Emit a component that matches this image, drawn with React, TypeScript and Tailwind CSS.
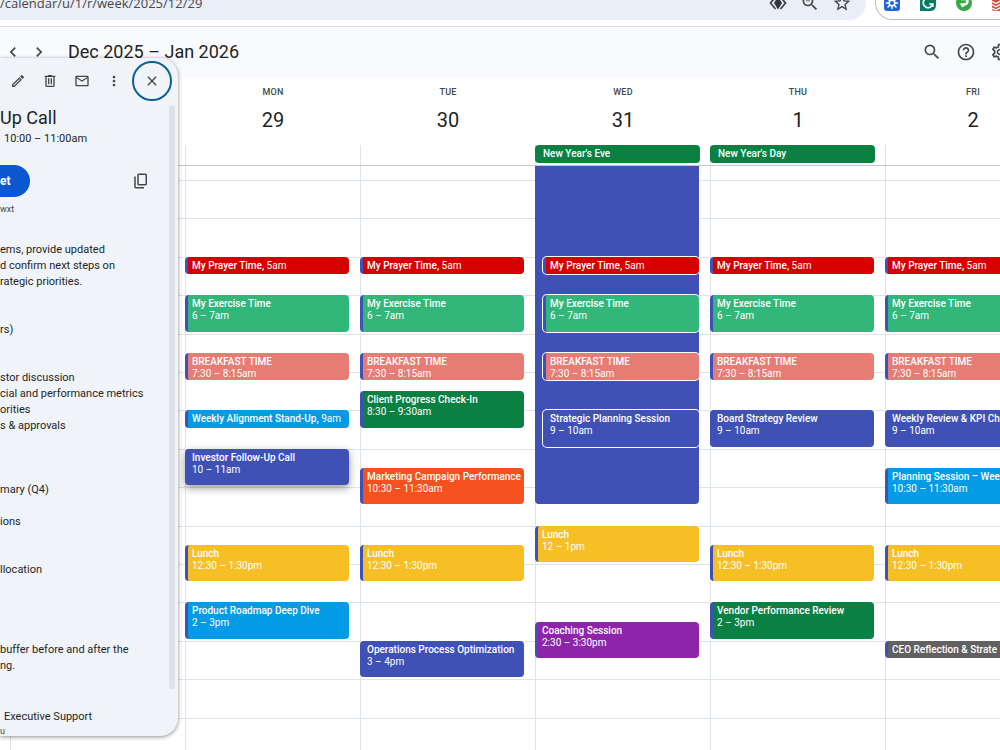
import type { ReactNode } from "react";
import clsx from "clsx";
import {
  MdChevronLeft,
  MdChevronRight,
  MdClose,
  MdHelpOutline,
  MdMoreVert,
  MdOutlineEdit,
  MdOutlineMail,
  MdOutlineSettings,
  MdSearch,
  MdStarBorder,
  MdZoomOut,
} from "react-icons/md";

interface CalendarEvent {
  title: string;
  time?: string;
  start: number;
  end: number;
  color: string;
  inline?: boolean;
  nested?: boolean;
  selected?: boolean;
}

interface Day {
  name: string;
  date: string;
  holiday?: string;
  events: CalendarEvent[];
}

const FIRST_HOUR = 3;
const HOURS = Array.from({ length: 15 }, (_, i) => FIRST_HOUR + i);

const prayer: CalendarEvent = {
  title: "My Prayer Time",
  time: "5am",
  start: 5,
  end: 5.5,
  color: "bg-[#d50000]",
  inline: true,
};
const exercise: CalendarEvent = {
  title: "My Exercise Time",
  time: "6 – 7am",
  start: 6,
  end: 7,
  color: "bg-[#33b679]",
};
const breakfast: CalendarEvent = {
  title: "BREAKFAST TIME",
  time: "7:30 – 8:15am",
  start: 7.5,
  end: 8.25,
  color: "bg-[#e67c73]",
};
const lunch: CalendarEvent = {
  title: "Lunch",
  time: "12:30 – 1:30pm",
  start: 12.5,
  end: 13.5,
  color: "bg-[#f6bf26]",
};
const routine = [prayer, exercise, breakfast];

const DAYS: Day[] = [
  { name: "", date: "", events: [] },
  {
    name: "MON",
    date: "29",
    events: [
      ...routine,
      { title: "Weekly Alignment Stand-Up", time: "9am", start: 9, end: 9.5, color: "bg-[#039be5]", inline: true },
      { title: "Investor Follow-Up Call", time: "10 – 11am", start: 10, end: 11, color: "bg-[#3f51b5]", selected: true },
      lunch,
      { title: "Product Roadmap Deep Dive", time: "2 – 3pm", start: 14, end: 15, color: "bg-[#039be5]" },
    ],
  },
  {
    name: "TUE",
    date: "30",
    events: [
      ...routine,
      { title: "Client Progress Check-In", time: "8:30 – 9:30am", start: 8.5, end: 9.5, color: "bg-[#0b8043]" },
      { title: "Marketing Campaign Performance", time: "10:30 – 11:30am", start: 10.5, end: 11.5, color: "bg-[#f4511e]" },
      lunch,
      { title: "Operations Process Optimization", time: "3 – 4pm", start: 15, end: 16, color: "bg-[#3f51b5]" },
    ],
  },
  {
    name: "WED",
    date: "31",
    holiday: "New Year's Eve",
    events: [
      { title: "", start: 2, end: 11.5, color: "bg-[#3f51b5]" },
      ...routine.map((event) => ({ ...event, nested: true })),
      { title: "Strategic Planning Session", time: "9 – 10am", start: 9, end: 10, color: "bg-[#3f51b5]", nested: true },
      { ...lunch, time: "12 – 1pm", start: 12, end: 13 },
      { title: "Coaching Session", time: "2:30 – 3:30pm", start: 14.5, end: 15.5, color: "bg-[#8e24aa]" },
    ],
  },
  {
    name: "THU",
    date: "1",
    holiday: "New Year's Day",
    events: [
      ...routine,
      { title: "Board Strategy Review", time: "9 – 10am", start: 9, end: 10, color: "bg-[#3f51b5]" },
      lunch,
      { title: "Vendor Performance Review", time: "2 – 3pm", start: 14, end: 15, color: "bg-[#0b8043]" },
    ],
  },
  {
    name: "FRI",
    date: "2",
    events: [
      ...routine,
      { title: "Weekly Review & KPI Ch", time: "9 – 10am", start: 9, end: 10, color: "bg-[#3f51b5]" },
      { title: "Planning Session – Wee", time: "10:30 – 11:30am", start: 10.5, end: 11.5, color: "bg-[#039be5]" },
      lunch,
      { title: "CEO Reflection & Strate", start: 15, end: 15.5, color: "bg-[#616161]", inline: true },
    ],
  },
];

// One blank entry is one empty 16px line
const DESCRIPTION = [
  "ems, provide updated",
  "d confirm next steps on",
  "rategic priorities.",
  "",
  "",
  "rs)",
  "",
  "",
  "stor discussion",
  "cial and performance metrics",
  "orities",
  "s & approvals",
  "",
  "",
  "",
  "mary (Q4)",
  "",
  "ions",
  "",
  "",
  "llocation",
  "",
  "",
  "",
  "",
  "buffer before and after the",
  "ng.",
];

// Row 1 is the sliver above 3am, then four rows per hour
function rowFor(hour: number) {
  return Math.max(1, 2 + (hour - FIRST_HOUR) * 4);
}

function EventBlock({ event }: { event: CalendarEvent }) {
  return (
    <button
      type="button"
      aria-label={event.title || "Busy"}
      style={{ gridRow: `${rowFor(event.start)} / ${rowFor(event.end)}` }}
      className={clsx(
        "col-start-1 mr-[11px] mb-[2px] flex min-h-0 min-w-0 flex-col overflow-hidden border-l-[3px] border-[#3f51b5] pt-[3px] pl-[4px] text-left text-[10px] leading-[12px] whitespace-nowrap text-white",
        event.color,
        event.title ? "rounded-[4px]" : "rounded-b-[4px]",
        event.nested ? "ml-[7px] ring-1 ring-white" : "-ml-px",
        event.selected && "z-10 shadow-[0_3px_8px_rgba(0,0,0,0.4)]",
      )}
    >
      {event.inline ? (
        <span>
          <span className="font-medium">
            {event.title}
            {event.time && ","}
          </span>
          {event.time && ` ${event.time}`}
        </span>
      ) : (
        <>
          <span className="font-medium">{event.title}</span>
          <span>{event.time}</span>
        </>
      )}
    </button>
  );
}

function DayColumn({ day }: { day: Day }) {
  return (
    <div className="grid h-[590px] grid-cols-1 grid-rows-[14px_repeat(60,minmax(0,1fr))] border-l border-[#dde3ea]">
      {HOURS.map((hour) => (
        <div
          key={hour}
          style={{ gridRow: `${rowFor(hour)} / ${rowFor(hour + 1)}` }}
          className="col-start-1 border-t border-[#dde3ea]"
        />
      ))}
      {day.events.map((event) => (
        <EventBlock key={event.title + event.start} event={event} />
      ))}
    </div>
  );
}

function IconButton({
  label,
  children,
}: {
  label: string;
  children: ReactNode;
}) {
  return (
    <button
      type="button"
      aria-label={label}
      className="flex size-5 shrink-0 items-center justify-center text-[#444746]"
    >
      {children}
    </button>
  );
}

function BrowserBar() {
  return (
    <div className="h-[27px] shrink-0 overflow-hidden border-b border-[#dcdee0] bg-white">
      <div className="-mt-[14px] flex h-[34px]">
        <div className="flex min-w-0 flex-1 items-center gap-3 rounded-r-full bg-[#e9eef8] pr-[14px]">
          <input
            aria-label="Address"
            readOnly
            value="/calendar/u/1/r/week/2025/12/29"
            className="min-w-0 flex-1 bg-transparent pt-[2px] font-['Open_Sans',sans-serif] text-[13px] text-[#474747] outline-none"
          />
          <IconButton label="Extension shortcut">
            <svg viewBox="0 0 18 18" className="size-[18px]" aria-hidden="true">
              <path d="M6.5 3 1.5 9l5 6M11.500 3l5 6-5 6" fill="none" stroke="#444746" strokeWidth="1.8" />
              <path d="M9 2.500 13 9l-4 6.500L5 9z" fill="#333638" />
            </svg>
          </IconButton>
          <IconButton label="Zoom">
            <MdZoomOut className="size-5" />
          </IconButton>
          <IconButton label="Bookmark this tab">
            <MdStarBorder className="size-5" />
          </IconButton>
        </div>
        <div className="ml-[9px] flex w-[125px] shrink-0 items-center gap-5 rounded-l-full border border-r-0 border-[#b9bcc2] pl-[8px]">
          <svg viewBox="0 0 16 16" className="size-4 shrink-0" aria-hidden="true">
            <rect width="16" height="16" rx="3" fill="#1f66dc" />
            <path d="M8 2.500v11M2.500 8h11M4.100 4.100l7.800 7.800M11.900 4.100l-7.800 7.800" stroke="#fff" strokeWidth="1.500" strokeLinecap="round" />
            <circle cx="8" cy="8" r="2.800" fill="#1f66dc" stroke="#fff" strokeWidth="1.500" />
          </svg>
          <svg viewBox="0 0 16 16" className="size-4 shrink-0" aria-hidden="true">
            <path d="M3 0h10q3 0 3 3v7q0 6-6 6H0V3q0-3 3-3z" fill="#0b7a62" />
            <path d="M11.500 4.500A4.800 4.800 0 1 0 12.700 9H9.200M12.800 8.200V12" fill="none" stroke="#fff" strokeWidth="1.700" />
          </svg>
          <svg viewBox="0 0 16 16" className="size-4 shrink-0" aria-hidden="true">
            <circle cx="8" cy="8" r="8" fill="#36a844" />
            <path d="M5 4h3q3.500 0 3.500 2.500T8.500 9.500L5.500 11.500" fill="none" stroke="#fff" strokeWidth="2.400" />
            <path d="M3.500 8.500 8 8.200 7 12z" fill="#fff" />
          </svg>
          <svg viewBox="0 0 16 16" className="size-4 shrink-0" aria-hidden="true">
            <rect width="16" height="16" rx="2" fill="#dc4c3e" />
            <path d="M0 6.500l4 2 8-4.500M0 9.800l4 2 8-4.500M0 13l4 2 8-4.500" fill="none" stroke="#fff" strokeWidth="1.300" />
          </svg>
        </div>
      </div>
    </div>
  );
}

function EventDetails() {
  return (
    <aside className="absolute top-[58px] left-0 z-20 h-[678px] w-[178px] overflow-hidden rounded-r-[18px] bg-[#f0f4f9] text-[#1f1f1f] shadow-[0_1px_4px_rgba(0,0,0,0.45)]">
      <div className="flex h-[46px] items-center gap-3 pl-[8px]">
        <IconButton label="Edit event">
          <MdOutlineEdit className="size-4" />
        </IconButton>
        <IconButton label="Delete event">
          <svg viewBox="0 0 24 24" fill="currentColor" className="size-4" aria-hidden="true">
            <path d="M7 21q-.825 0-1.412-.587T5 19V6H4V4h5V3h6v1h5v2h-1v13q0 .825-.587 1.413T17 21zM17 6H7v13h10zM9 17h2V8H9zm4 0h2V8h-2z" />
          </svg>
        </IconButton>
        <IconButton label="Email guests">
          <MdOutlineMail className="size-4" />
        </IconButton>
        <IconButton label="Options">
          <MdMoreVert className="size-4" />
        </IconButton>
        <button
          type="button"
          aria-label="Close"
          className="-ml-[4px] flex size-10 shrink-0 items-center justify-center rounded-full border-2 border-[#0b6292] text-[#444746]"
        >
          <MdClose className="size-4" />
        </button>
      </div>
      <div className="flex pr-[3px]">
        <div className="min-w-0 flex-1">
          <h2 className="pt-[1px] text-[18px] leading-[26px]">Up Call</h2>
          <p className="pl-1 text-[11px] leading-4">10:00 – 11:00am</p>
          <div className="mt-[18px] flex items-center justify-between pr-[18px]">
            <button
              type="button"
              className="h-8 rounded-r-full bg-[#0b57d0] pr-[19px] text-[12px] font-bold text-white"
            >
              et
            </button>
            <IconButton label="Copy conference info">
              <svg viewBox="0 0 24 24" fill="currentColor" className="size-[18px]" aria-hidden="true">
                <path d="M9 18q-.825 0-1.412-.587T7 16V4q0-.825.588-1.412T9 2h9q.825 0 1.413.588T20 4v12q0 .825-.587 1.413T18 18zm0-2h9V4H9zm-4 6q-.825 0-1.412-.587T3 20V6h2v14h11v2z" />
              </svg>
            </IconButton>
          </div>
          <p className="mt-[4px] text-[9px] leading-4 text-[#444746]">wxt</p>
          <div className="mt-[25px] text-[11px] whitespace-nowrap">
            {DESCRIPTION.map((line, i) => (
              <p key={i} className="h-4 leading-4">
                {line}
              </p>
            ))}
          </div>
          <p className="mt-[35px] pl-[4px] text-[11px] leading-4">
            Executive Support
          </p>
          <p className="text-[9px] leading-[12px] text-[#444746]">u</p>
        </div>
        <div className="mt-[1px] h-[584px] w-[6px] shrink-0 rounded-full bg-[#dfe1e4]" />
      </div>
    </aside>
  );
}

export default function App() {
  return (
    <div className="relative flex h-screen flex-col overflow-hidden bg-white font-['Roboto',sans-serif]">
      <BrowserBar />
      <header className="flex h-[50px] shrink-0 items-center bg-[#f8fafd] pl-[3px]">
        <nav className="flex gap-[6px]">
          <IconButton label="Previous week">
            <MdChevronLeft className="size-5" />
          </IconButton>
          <IconButton label="Next week">
            <MdChevronRight className="size-5" />
          </IconButton>
        </nav>
        <h1 className="ml-[19px] flex-1 text-[18px] leading-6 text-[#1f1f1f]">
          Dec 2025 – Jan 2026
        </h1>
        <div className="-mr-[10px] flex gap-[14px]">
          <IconButton label="Search">
            <MdSearch className="size-5" />
          </IconButton>
          <IconButton label="Support">
            <MdHelpOutline className="size-5" />
          </IconButton>
          <IconButton label="Settings">
            <MdOutlineSettings className="size-5" />
          </IconButton>
        </div>
      </header>
      <main className="flex min-h-0 flex-1 flex-col">
        <div className="flex shrink-0 border-b border-[#c4c7c5]">
          <div className="ml-[10px] grid w-[calc(100%+50px)] shrink-0 grid-cols-6">
            {DAYS.map((day) => (
              <div key={day.date}>
                <div className="flex h-[68px] flex-col items-center pt-2 pl-px text-[#1f1f1f]">
                  <span className="text-[9px] leading-[14px] font-medium tracking-wide text-[#444746]">
                    {day.name}
                  </span>
                  <span className="mt-[7px] text-[20px] leading-[28px]">
                    {day.date}
                  </span>
                </div>
                <div className="h-5 border-l border-[#dde3ea]">
                  {day.holiday && (
                    <button
                      type="button"
                      className="-ml-px block h-[18px] w-[165px] rounded-[4px] bg-[#0b8043] pl-[8px] text-left text-[10px] leading-[18px] font-medium text-white"
                    >
                      {day.holiday}
                    </button>
                  )}
                </div>
              </div>
            ))}
          </div>
        </div>
        <div className="flex min-h-0 flex-1 overflow-hidden">
          <div className="ml-[10px] grid w-[calc(100%+50px)] shrink-0 grid-cols-6">
            {DAYS.map((day) => (
              <DayColumn key={day.date} day={day} />
            ))}
          </div>
        </div>
      </main>
      <EventDetails />
    </div>
  );
}
